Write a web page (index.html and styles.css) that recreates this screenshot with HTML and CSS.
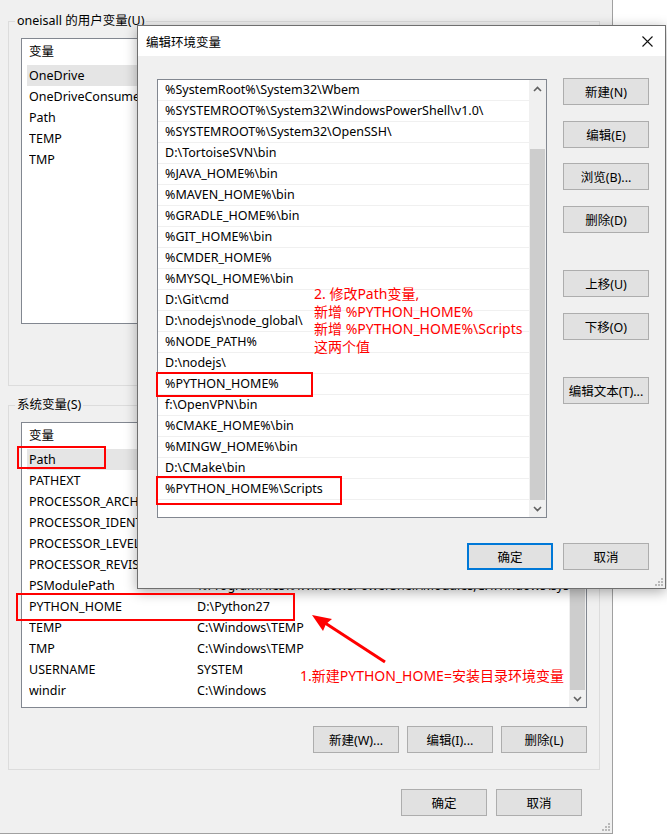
FILE: index.html
```html
<!DOCTYPE html>
<html lang="zh-CN">
<head>
    <meta charset="UTF-8">
    <title>环境变量</title>
    <link rel="stylesheet" href="styles.css">
</head>
<body>
    <div class="window">
        <fieldset class="group">
            <legend>oneisall 的用户变量(U)</legend>
            <div class="listview">
                <div class="lv-body">
                    <div class="lv-head"><span class="lv-name">变量</span></div>
                    <div class="lv-row selected"><span class="lv-name">OneDrive</span></div>
                    <div class="lv-row"><span class="lv-name">OneDriveConsumer</span></div>
                    <div class="lv-row"><span class="lv-name">Path</span></div>
                    <div class="lv-row"><span class="lv-name">TEMP</span></div>
                    <div class="lv-row"><span class="lv-name">TMP</span></div>
                </div>
            </div>
            <div class="btn-row">
                <button class="btn">新建(N)...</button>
                <button class="btn">编辑(E)...</button>
                <button class="btn">删除(D)</button>
            </div>
        </fieldset>

        <fieldset class="group">
            <legend>系统变量(S)</legend>
            <div class="listview">
                <div class="lv-body">
                    <div class="lv-head"><span class="lv-name">变量</span></div>
                    <div class="lv-row selected"><span class="lv-name">Path</span></div>
                    <div class="lv-row"><span class="lv-name">PATHEXT</span></div>
                    <div class="lv-row"><span class="lv-name">PROCESSOR_ARCHITECTURE</span></div>
                    <div class="lv-row"><span class="lv-name">PROCESSOR_IDENTIFIER</span></div>
                    <div class="lv-row"><span class="lv-name">PROCESSOR_LEVEL</span></div>
                    <div class="lv-row"><span class="lv-name">PROCESSOR_REVISION</span></div>
                    <div class="lv-row"><span class="lv-name">PSModulePath</span><span class="lv-value">%ProgramFiles%\WindowsPowerShell\Modules;C:\Windows\system32\WindowsPowerShell\v1.0\Modules</span></div>
                    <div class="lv-row"><span class="lv-name">PYTHON_HOME</span><span class="lv-value">D:\Python27</span></div>
                    <div class="lv-row"><span class="lv-name">TEMP</span><span class="lv-value">C:\Windows\TEMP</span></div>
                    <div class="lv-row"><span class="lv-name">TMP</span><span class="lv-value">C:\Windows\TEMP</span></div>
                    <div class="lv-row"><span class="lv-name">USERNAME</span><span class="lv-value">SYSTEM</span></div>
                    <div class="lv-row"><span class="lv-name">windir</span><span class="lv-value">C:\Windows</span></div>
                </div>
                <div class="scrollbar sys-scroll">
                    <div class="sb-arrow"><svg width="9" height="6" viewBox="0 0 9 6"><path d="M1 5 L4.5 1.5 L8 5" /></svg></div>
                    <div class="sb-track"><div class="sb-thumb"></div></div>
                    <div class="sb-arrow"><svg width="9" height="6" viewBox="0 0 9 6"><path d="M1 1 L4.5 4.5 L8 1" /></svg></div>
                </div>
            </div>
            <div class="btn-row">
                <button class="btn">新建(W)...</button>
                <button class="btn">编辑(I)...</button>
                <button class="btn">删除(L)</button>
            </div>
        </fieldset>

        <div class="btn-row footer">
            <button class="btn">确定</button>
            <button class="btn">取消</button>
        </div>

        <svg class="grip" width="9" height="9" viewBox="0 0 9 9">
            <rect x="7" y="1" width="2" height="2"/><rect x="4" y="4" width="2" height="2"/><rect x="7" y="4" width="2" height="2"/>
            <rect x="1" y="7" width="2" height="2"/><rect x="4" y="7" width="2" height="2"/><rect x="7" y="7" width="2" height="2"/>
        </svg>
    </div>

    <!-- edit dialog on top of the main window -->
    <div class="dialog">
        <div class="dlg-title">
            <span>编辑环境变量</span>
            <svg class="dlg-close" width="11" height="11" viewBox="0 0 11 11"><path d="M0.5 0.5 L10.5 10.5 M10.5 0.5 L0.5 10.5" /></svg>
        </div>
        <div class="dlg-body">
            <div class="dlg-main">
                <div class="path-list">
                    <div class="path-items">
                        <div class="path-item">%SystemRoot%\System32\Wbem</div>
                        <div class="path-item">%SYSTEMROOT%\System32\WindowsPowerShell\v1.0\</div>
                        <div class="path-item">%SYSTEMROOT%\System32\OpenSSH\</div>
                        <div class="path-item">D:\TortoiseSVN\bin</div>
                        <div class="path-item">%JAVA_HOME%\bin</div>
                        <div class="path-item">%MAVEN_HOME%\bin</div>
                        <div class="path-item">%GRADLE_HOME%\bin</div>
                        <div class="path-item">%GIT_HOME%\bin</div>
                        <div class="path-item">%CMDER_HOME%</div>
                        <div class="path-item">%MYSQL_HOME%\bin</div>
                        <div class="path-item">D:\Git\cmd</div>
                        <div class="path-item">D:\nodejs\node_global\</div>
                        <div class="path-item">%NODE_PATH%</div>
                        <div class="path-item">D:\nodejs\</div>
                        <div class="path-item">%PYTHON_HOME%</div>
                        <div class="path-item">f:\OpenVPN\bin</div>
                        <div class="path-item">%CMAKE_HOME%\bin</div>
                        <div class="path-item">%MINGW_HOME%\bin</div>
                        <div class="path-item">D:\CMake\bin</div>
                        <div class="path-item">%PYTHON_HOME%\Scripts</div>
                    </div>
                    <div class="scrollbar dlg-scroll">
                        <div class="sb-arrow"><svg width="9" height="6" viewBox="0 0 9 6"><path d="M1 5 L4.5 1.5 L8 5" /></svg></div>
                        <div class="sb-track"><div class="sb-thumb"></div></div>
                        <div class="sb-arrow"><svg width="9" height="6" viewBox="0 0 9 6"><path d="M1 1 L4.5 4.5 L8 1" /></svg></div>
                    </div>
                </div>
                <div class="side-buttons">
                    <button class="btn">新建(N)</button>
                    <button class="btn">编辑(E)</button>
                    <button class="btn">浏览(B)...</button>
                    <button class="btn">删除(D)</button>
                    <button class="btn sep">上移(U)</button>
                    <button class="btn">下移(O)</button>
                    <button class="btn sep">编辑文本(T)...</button>
                </div>
            </div>
            <div class="btn-row dlg-footer">
                <button class="btn default">确定</button>
                <button class="btn">取消</button>
            </div>
        </div>
        <svg class="grip" width="9" height="9" viewBox="0 0 9 9">
            <rect x="7" y="1" width="2" height="2"/><rect x="4" y="4" width="2" height="2"/><rect x="7" y="4" width="2" height="2"/>
            <rect x="1" y="7" width="2" height="2"/><rect x="4" y="7" width="2" height="2"/><rect x="7" y="7" width="2" height="2"/>
        </svg>
    </div>

    <!-- red annotations -->
    <div class="mark mark-path"></div>
    <div class="mark mark-py-home"></div>
    <div class="mark mark-py-scripts"></div>
    <div class="mark mark-py-var"></div>

    <div class="note note-edit">
        2. 修改Path变量,<br>
        新增 %PYTHON_HOME%<br>
        新增 %PYTHON_HOME%\Scripts<br>
        这两个值
    </div>
    <div class="note note-new">1.新建PYTHON_HOME=安装目录环境变量</div>

    <svg class="arrow" width="667" height="838" viewBox="0 0 667 838">
        <line x1="385" y1="662" x2="322" y2="621" />
        <polygon points="312,615 332,619 326,624 323,631" />
    </svg>
</body>
</html>
```

FILE: styles.css
```css
body {
    margin: 0;
    width: 667px;
    height: 838px;
    overflow: hidden;
    position: relative;
    background: #fff;
    font-family: "Noto Sans", "Noto Sans CJK SC", sans-serif;
    font-size: 12.5px;
    color: #000;
}

/* main window */
.window {
    position: relative;
    width: 613px;
    height: 834px;
    box-sizing: border-box;
    padding: 13px 0 0 8px;
    background: #f0f0f0;
    border-right: 1px solid #a0a0a0;
    border-bottom: 1px solid #a0a0a0;
}
.group {
    width: 592px;
    box-sizing: border-box;
    min-width: 0;
    margin: 0 0 11px;
    padding: 9px 12px 16px;
    border: 1px solid #dcdcdc;
}
.group legend {
    margin-left: -6px;
    padding: 0 2px;
    line-height: 16px;
}
.listview {
    display: flex;
    height: 286px;
    box-sizing: border-box;
    border: 1px solid #828790;
    background: #fff;
    overflow: hidden;
}
.lv-body {
    flex: 1;
    min-width: 0;
    padding-left: 5px;
}
.lv-head {
    display: flex;
    height: 26px;
    line-height: 26px;
    padding-left: 2px;
}
.lv-row {
    display: flex;
    height: 21px;
    line-height: 21px;
    padding-left: 2px;
    white-space: nowrap;
}
.lv-row.selected {
    background: #e5e5e5;
}
.lv-name {
    flex: none;
    width: 168px;
    overflow: hidden;
}
.lv-value {
    flex: 1;
    overflow: hidden;
}

/* scrollbars */
.scrollbar {
    flex: none;
    display: flex;
    flex-direction: column;
    width: 17px;
    background: #f0f0f0;
}
.sb-arrow {
    display: flex;
    align-items: center;
    justify-content: center;
    height: 17px;
}
.sb-arrow path {
    fill: none;
    stroke: #606060;
    stroke-width: 1.6;
}
.sb-track {
    flex: 1;
    display: flex;
    flex-direction: column;
}
.sb-thumb {
    flex: 1;
    margin: 0 1px;
    background: #cdcdcd;
}
.sys-scroll .sb-track {
    padding-top: 20px;
}
.dlg-scroll .sb-track {
    padding-top: 52px;
}

/* buttons */
.btn-row {
    display: flex;
    justify-content: flex-end;
    gap: 8px;
    margin-top: 18px;
}
.btn {
    width: 86px;
    height: 27px;
    box-sizing: border-box;
    padding: 0;
    border: 1px solid #adadad;
    background: #e1e1e1;
    color: #000;
    font: inherit;
}
.btn.default {
    border: 2px solid #0078d7;
}
.footer {
    gap: 9px;
    margin-top: 19px;
    padding-right: 30px;
}
.grip {
    position: absolute;
    right: 2px;
    bottom: 2px;
    fill: #b9b9b9;
}

/* edit dialog */
.dialog {
    position: absolute;
    left: 137px;
    top: 25px;
    width: 529px;
    height: 564px;
    box-sizing: border-box;
    border: 1px solid #6f6f6f;
    background: #f0f0f0;
    box-shadow: 0 3px 12px rgba(0, 0, 0, 0.32);
}
.dlg-title {
    display: flex;
    align-items: center;
    justify-content: space-between;
    height: 30px;
    padding: 0 12px 0 8px;
    background: #fff;
}
.dlg-close path {
    fill: none;
    stroke: #111;
    stroke-width: 1.1;
}
.dlg-body {
    padding: 23px 16px 0 19px;
}
.dlg-main {
    display: flex;
    gap: 16px;
}
.path-list {
    display: flex;
    width: 390px;
    height: 439px;
    box-sizing: border-box;
    border: 1px solid #828790;
    background: #fff;
}
.path-items {
    flex: 1;
}
.path-item {
    height: 21px;
    box-sizing: border-box;
    line-height: 20px;
    padding-left: 7px;
    border-bottom: 1px solid #f0f0f0;
    white-space: nowrap;
}
.side-buttons {
    display: flex;
    flex-direction: column;
    gap: 15.7px;
    margin-top: -1px;
}
.side-buttons .sep {
    margin-top: 21.3px;
}
.dlg-footer {
    gap: 10px;
    margin-top: 25px;
}

/* annotations */
.mark {
    position: absolute;
    box-sizing: border-box;
    border: 2px solid #f00;
}
.mark-path { left: 17px; top: 446px; width: 89px; height: 23px; }
.mark-py-home { left: 156px; top: 372px; width: 157px; height: 25px; }
.mark-py-scripts { left: 156px; top: 476px; width: 186px; height: 29px; }
.mark-py-var { left: 16px; top: 593px; width: 279px; height: 28px; }

.note {
    position: absolute;
    color: #f00;
    font-size: 14px;
    line-height: 17.5px;
    white-space: nowrap;
}
.note-edit { left: 314px; top: 285px; }
.note-new { left: 300px; top: 667px; line-height: 18px; }

.arrow {
    position: absolute;
    left: 0;
    top: 0;
    pointer-events: none;
}
.arrow line {
    stroke: #f00;
    stroke-width: 3;
}
.arrow polygon {
    fill: #f00;
}
```
